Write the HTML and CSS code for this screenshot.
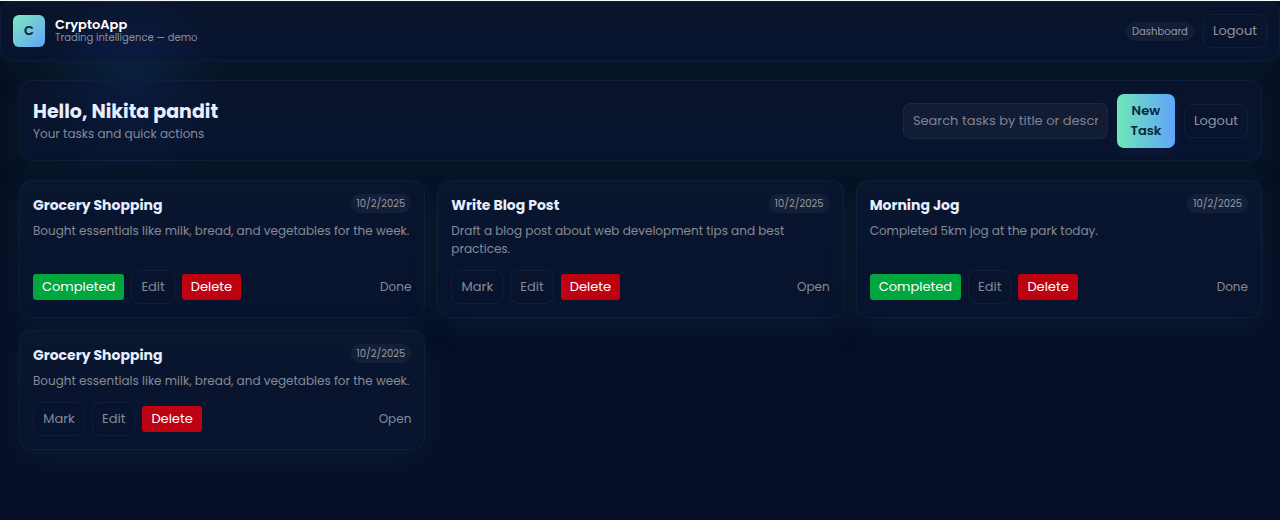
FILE: index.html
```html
<!DOCTYPE html>
<html lang="en">
<head>
<meta charset="utf-8">
<meta name="viewport" content="width=device-width, initial-scale=1">
<title>CryptoApp</title>
<link rel="stylesheet" href="styles.css">
</head>
<body>
<header class="panel topbar">
  <div class="brand">
    <div class="logo">C</div>
    <div>
      <div class="brand-name">CryptoApp</div>
      <div class="brand-sub">Trading intelligence — demo</div>
    </div>
  </div>
  <nav class="nav">
    <a class="pill" href="#">Dashboard</a>
    <button class="btn btn-ghost btn-logout" type="button">Logout</button>
  </nav>
</header>
<main class="main">
  <section class="panel hero">
    <div>
      <h1 class="hero-title">Hello, Nikita pandit</h1>
      <p class="hero-sub">Your tasks and quick actions</p>
    </div>
    <div class="hero-actions">
      <input class="search" type="text" aria-label="Search tasks" placeholder="Search tasks by title or descr">
      <button class="btn-new" type="button">New Task</button>
      <button class="btn btn-ghost btn-logout" type="button">Logout</button>
    </div>
  </section>
  <section class="grid">
    <article class="panel card">
      <div class="card-head"><h2 class="card-title">Grocery Shopping</h2><span class="pill">10/2/2025</span></div>
      <p class="card-desc">Bought essentials like milk, bread, and vegetables for the week.</p>
      <div class="card-foot">
        <button class="btn btn-done" type="button">Completed</button>
        <button class="btn btn-ghost btn-edit" type="button">Edit</button>
        <button class="btn btn-delete" type="button">Delete</button>
        <span class="status">Done</span>
      </div>
    </article>
    <article class="panel card">
      <div class="card-head"><h2 class="card-title">Write Blog Post</h2><span class="pill">10/2/2025</span></div>
      <p class="card-desc">Draft a blog post about web development tips and best practices.</p>
      <div class="card-foot">
        <button class="btn btn-ghost btn-mark" type="button">Mark</button>
        <button class="btn btn-ghost btn-edit" type="button">Edit</button>
        <button class="btn btn-delete" type="button">Delete</button>
        <span class="status">Open</span>
      </div>
    </article>
    <article class="panel card">
      <div class="card-head"><h2 class="card-title">Morning Jog</h2><span class="pill">10/2/2025</span></div>
      <p class="card-desc">Completed 5km jog at the park today.</p>
      <div class="card-foot">
        <button class="btn btn-done" type="button">Completed</button>
        <button class="btn btn-ghost btn-edit" type="button">Edit</button>
        <button class="btn btn-delete" type="button">Delete</button>
        <span class="status">Done</span>
      </div>
    </article>
    <article class="panel card">
      <div class="card-head"><h2 class="card-title">Grocery Shopping</h2><span class="pill">10/2/2025</span></div>
      <p class="card-desc">Bought essentials like milk, bread, and vegetables for the week.</p>
      <div class="card-foot">
        <button class="btn btn-ghost btn-mark" type="button">Mark</button>
        <button class="btn btn-ghost btn-edit" type="button">Edit</button>
        <button class="btn btn-delete" type="button">Delete</button>
        <span class="status">Open</span>
      </div>
    </article>
  </section>
</main>
</body>
</html>
```
FILE: styles.css
```css
* { box-sizing: border-box; }

body {
  margin: 0;
  min-height: 100vh;
  border-top: 1px solid #f4f7f8;
  font-family: Poppins, Inter, "Open Sans", sans-serif;
  font-size: 13px;
  line-height: 18px;
  color: #e6eeff;
  background: linear-gradient(180deg, #071022 0%, #071028 60%, #071028 100%);
}

h1, h2, p { margin: 0; }
button, input { font: inherit; }
button { cursor: pointer; }

.panel {
  border: 1px solid rgba(120, 170, 200, 0.07);
  border-radius: 13px;
  padding: 13px;
  background: linear-gradient(180deg, #09162e, #08132e);
  box-shadow: 0 6px 28px rgba(10, 42, 52, 0.5);
}

.topbar {
  display: flex;
  align-items: center;
  justify-content: space-between;
  padding: 12px;
  background:
    radial-gradient(circle 90px at 130px 75px, rgba(14, 44, 105, 0.4), transparent),
    linear-gradient(180deg, #09142b, #08142f);
}
.brand { display: flex; align-items: center; gap: 10px; }
.logo {
  display: grid;
  place-items: center;
  width: 32px;
  height: 32px;
  border-radius: 6px;
  background: linear-gradient(135deg, #7ee8bd, #5fa5fa);
  color: #05202f;
  font-weight: 600;
}
.brand-name { color: #fff; font-weight: 600; line-height: 14px; }
.brand-sub { color: #8a8f9b; font-size: 10px; line-height: 12px; }
.nav { display: flex; align-items: center; gap: 9px; }

.pill {
  flex: none;
  padding: 0 6px;
  border-radius: 10px;
  background: rgba(255, 255, 255, 0.045);
  color: #9498a4;
  font-size: 10px;
  line-height: 19px;
  text-decoration: none;
}

.btn {
  padding: 0 9px;
  border: 0;
  border-radius: 3px;
  color: #fff;
  line-height: 26px;
}
.btn-ghost {
  border: 1px solid rgba(140, 170, 210, 0.08);
  border-radius: 8px;
  background: transparent;
  color: #858a96;
  line-height: 32px;
}
.btn-logout { min-width: 64px; color: #9296a1; }
.btn-done { min-width: 91px; background: #00a63e; }
.btn-edit { min-width: 43px; }
.btn-mark { min-width: 52px; }
.btn-delete { min-width: 59px; background: #bd0312; }

.main {
  padding: 19px 18px 19px 19px;
  background: radial-gradient(circle 90px at 130px 15px, rgba(16, 50, 105, 0.4), transparent);
}
.hero {
  display: flex;
  align-items: center;
  justify-content: space-between;
  gap: 10px;
  margin-bottom: 19px;
  padding: 13px 13px 12px;
  background:
    radial-gradient(circle 90px at 110px 0, rgba(14, 44, 105, 0.3), transparent),
    linear-gradient(180deg, #09142b, #08142f);
}
.hero-title { font-size: 19px; line-height: 26px; font-weight: 700; }
.hero-sub { color: #868a96; font-size: 12px; }
.hero-actions { display: flex; align-items: center; gap: 9px; }
.search {
  width: 205px;
  height: 36px;
  padding: 0 9px;
  border: 1px solid rgba(255, 255, 255, 0.05);
  border-radius: 8px;
  background: rgba(255, 255, 255, 0.04);
  color: #e6eeff;
}
.search::placeholder { color: #7f8492; }
.btn-new {
  width: 58px;
  padding: 7px 10px;
  border: 0;
  border-radius: 7px;
  background: linear-gradient(90deg, #6ee7b7, #60a5fa);
  box-shadow: 0 4px 14px rgba(40, 70, 140, 0.15);
  color: #06283a;
  font-weight: 600;
  line-height: 20px;
}

.grid {
  display: grid;
  grid-template-columns: repeat(3, minmax(0, 1fr));
  gap: 12px;
}
.card { display: flex; flex-direction: column; }
.card-head {
  display: flex;
  align-items: flex-start;
  justify-content: space-between;
  margin-bottom: 6px;
}
.card-title { font-size: 14px; line-height: 22px; font-weight: 700; }
.card-desc { margin-bottom: 12px; color: #868a96; font-size: 12px; }
.card-foot {
  display: flex;
  align-items: center;
  gap: 7px;
  margin-top: auto;
}
.status { margin-left: auto; color: #868a96; font-size: 12px; }
```
